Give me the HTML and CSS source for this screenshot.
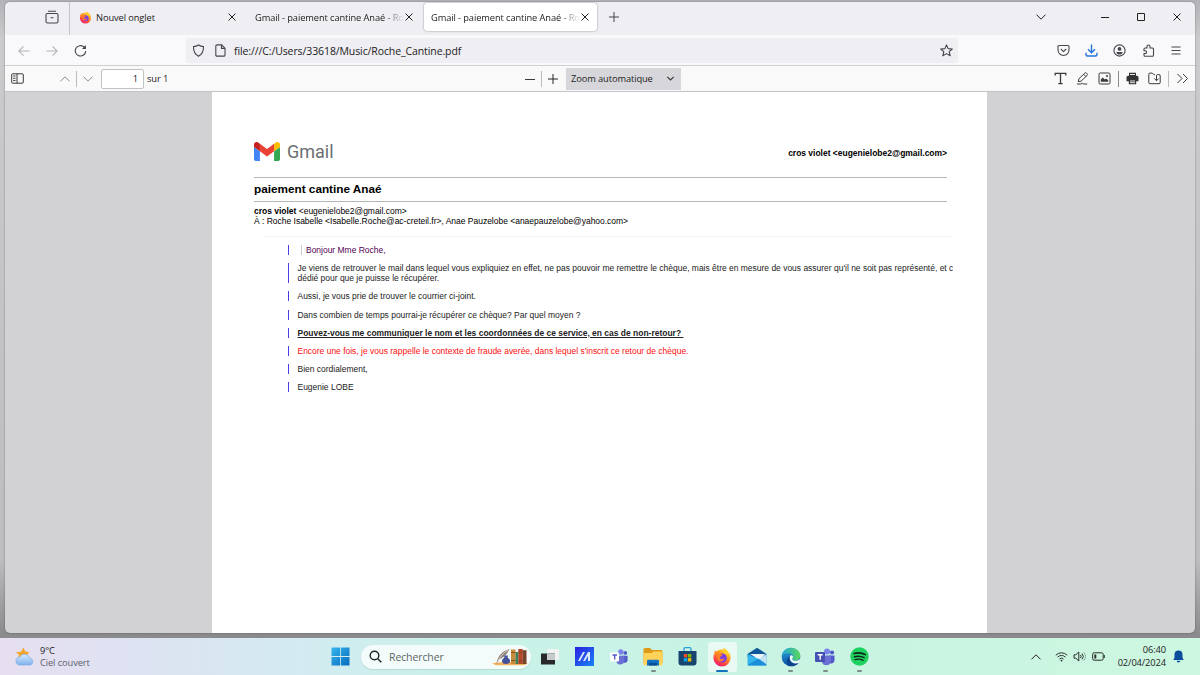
FILE: index.html
```html
<!DOCTYPE html>
<html lang="fr">
<head>
    <meta charset="UTF-8">
    <meta name="viewport" content="width=device-width, initial-scale=1.0">
    <title>Roche_Cantine.pdf</title>
    <link rel="stylesheet" href="styles.css">
</head>
<body>
    <svg class="defs" width="0" height="0">
        <defs>
            <linearGradient id="foxFlame" x1="0.8" y1="0" x2="0.2" y2="1">
                <stop offset="0" stop-color="#ffe226"/>
                <stop offset="0.4" stop-color="#ff9722"/>
                <stop offset="0.75" stop-color="#ff3b47"/>
                <stop offset="1" stop-color="#e31587"/>
            </linearGradient>
            <linearGradient id="winBlue" gradientUnits="userSpaceOnUse" x1="0" y1="0" x2="19" y2="19">
                <stop offset="0" stop-color="#35b8ee"/>
                <stop offset="1" stop-color="#0669bd"/>
            </linearGradient>
            <linearGradient id="myAsus" x1="0" y1="0" x2="1" y2="1">
                <stop offset="0" stop-color="#2a1fe0"/>
                <stop offset="1" stop-color="#1a84f5"/>
            </linearGradient>
            <linearGradient id="edgeBlue" x1="0" y1="0" x2="0" y2="1">
                <stop offset="0" stop-color="#2ba5dc"/>
                <stop offset="1" stop-color="#0c4fa3"/>
            </linearGradient>
            <linearGradient id="edgeGreen" x1="0" y1="0" x2="1" y2="0">
                <stop offset="0" stop-color="#22a5dd"/>
                <stop offset="1" stop-color="#5bd75a"/>
            </linearGradient>
            <linearGradient id="cloud" x1="0" y1="0" x2="0" y2="1">
                <stop offset="0" stop-color="#d7ebff"/>
                <stop offset="1" stop-color="#7fb2ee"/>
            </linearGradient>
            <symbol id="firefox" viewBox="0 0 20 20">
                <circle cx="10" cy="10.8" r="8.6" fill="url(#foxFlame)"/>
                <path d="M11.5 0.8c2.6 1.4 5.4 4 6.7 7.4l-6.4-1.4z" fill="#ffce28"/>
                <path d="M2 8.4L2.8 3.6 5.2 5.3 6.6 4l.8 2.5z" fill="#ff8a1f"/>
                <circle cx="10.2" cy="11" r="4.6" fill="#7a3fe0"/>
                <path d="M5 8.2c2-2.1 4.6-1.6 5.6-.2L8.8 9.6c-.9.4-1.2 1.4-.4 2.1 1.3 1 3.1.3 4.1-.6-.3 2.6-2.4 3.8-4.4 3.4C5.3 13.900 4.200 10.800 5 8.200z" fill="#ff7a2a"/>
            </symbol>
            <symbol id="close" viewBox="0 0 10 10">
                <path d="M1.500 1.500l7 7M8.500 1.500l-7 7" stroke="currentColor" fill="none"/>
            </symbol>
            <symbol id="chevron" viewBox="0 0 12 12">
                <path d="M1.500 3.700L6 8.200l4.500-4.500" stroke="currentColor" fill="none"/>
            </symbol>
            <symbol id="plus" viewBox="0 0 12 12">
                <path d="M6 1v10M1 6h10" stroke="currentColor" fill="none"/>
            </symbol>
            <symbol id="teams" viewBox="0 0 20 20">
                <circle cx="12" cy="4.500" r="3" fill="#7b83eb"/>
                <circle cx="17" cy="5.500" r="2.100" fill="#5059c9"/>
                <path d="M14 8.500h5.500v5a3.200 3.200 0 0 1-5.500 2z" fill="#5059c9"/>
                <path d="M7 8.500h9v5.500a4.600 4.600 0 0 1-9 1z" fill="#6a70d4"/>
            </symbol>
        </defs>
    </svg>

    <div class="desktop">
        <div class="window">
            <div class="tab-strip">
                <div class="history">
                    <svg width="14" height="14" viewBox="0 0 14 14" fill="none" stroke="#45454d" stroke-width="1.1"><path d="M3 1.300h8M1 5.500V5a1.500 1.500 0 0 1 1.500-1.500h9A1.500 1.500 0 0 1 13 5v6.500a1.500 1.500 0 0 1-1.500 1.500h-9A1.500 1.500 0 0 1 1 11.500zM5.500 7.700h3"/></svg>
                </div>
                <div class="tab first">
                    <svg class="favicon" width="13" height="13"><use href="#firefox"/></svg>
                    <span class="tab-title">Nouvel onglet</span>
                    <svg class="x" width="10" height="10"><use href="#close"/></svg>
                </div>
                <div class="tab">
                    <span class="tab-title faded">Gmail - paiement cantine Anaé - Ro</span>
                    <svg class="x" width="10" height="10"><use href="#close"/></svg>
                </div>
                <div class="tab active">
                    <span class="tab-title faded">Gmail - paiement cantine Anaé - Ro</span>
                    <svg class="x" width="10" height="10"><use href="#close"/></svg>
                </div>
                <svg class="new-tab" width="12" height="12"><use href="#plus"/></svg>
                <div class="win-buttons">
                    <svg width="12" height="12"><use href="#chevron"/></svg>
                    <svg class="min" width="10" height="10" viewBox="0 0 10 10" stroke="#222"><path d="M1 5.500h8"/></svg>
                    <svg width="10" height="10" viewBox="0 0 10 10" fill="none" stroke="#222"><path d="M1.500 1.500h7v7h-7z"/></svg>
                    <svg width="10" height="10"><use href="#close"/></svg>
                </div>
            </div>

            <div class="nav-bar">
                <div class="nav-buttons">
                    <svg class="disabled" width="12" height="12" viewBox="0 0 12 12"><path d="M11.500 6H1M5.500 1.300L.8 6l4.700 4.700"/></svg>
                    <svg class="disabled" width="12" height="12" viewBox="0 0 12 12"><path d="M.5 6H11M6.500 1.300L11.200 6l-4.700 4.700"/></svg>
                    <svg width="13" height="13" viewBox="0 0 13 13"><path d="M11.700 7A5.200 5.200 0 1 1 10 3l1.500 1.500"/><path d="M11.900 1v3.900H8z" fill="#45454d" stroke="none"/></svg>
                </div>
                <div class="url-bar">
                    <svg width="13" height="13" viewBox="0 0 13 13"><path d="M6.500 1c1.500 1 3.200 1.500 5 1.600C11.600 7.500 10.100 10.600 6.500 12.300 2.900 10.600 1.400 7.500 1.500 2.600 3.300 2.500 5 2 6.500 1z"/></svg>
                    <svg class="doc" width="11" height="13" viewBox="0 0 11 13"><path d="M2 .9h4.700l3.300 3.300v6.700a1.200 1.200 0 0 1-1.200 1.200H2A1.200 1.200 0 0 1 .8 10.900V2.100A1.200 1.200 0 0 1 2 .9zM6.500 1v3.400H10"/></svg>
                    <span>file:///C:/Users/33618/Music/Roche_Cantine.pdf</span>
                    <svg class="star" width="13" height="13" viewBox="0 0 13 13"><path d="M6.500.9l1.600 3.700 4.200.4-3.100 2.700 1 4.100-3.700-2.200-3.700 2.200 1-4.100L.7 5l4.200-.4z" stroke-linejoin="round"/></svg>
                </div>
                <div class="nav-tools">
                    <svg width="13" height="13" viewBox="0 0 13 13"><path d="M2 1.500h9a1 1 0 0 1 1 1V6A5.500 5.500 0 0 1 1 6V2.500a1 1 0 0 1 1-1zM3.800 5l2.700 2.600L9.200 5"/></svg>
                    <svg class="download" width="13" height="13" viewBox="0 0 13 13"><path d="M6.500.5v8M3 5.300l3.500 3.500L10 5.300M1 8.800v1.700a1.500 1.500 0 0 0 1.500 1.500h8a1.500 1.500 0 0 0 1.500-1.500V8.800"/></svg>
                    <svg width="13" height="13" viewBox="0 0 13 13"><circle cx="6.500" cy="6.500" r="5.600"/><circle cx="6.500" cy="4.900" r="1.900" fill="#45454d" stroke="none"/><path d="M3.300 8h6.400c-.5 1.800-1.700 2.600-3.200 2.600S3.800 9.800 3.300 8z" fill="#45454d" stroke="none"/></svg>
                    <svg width="13" height="13" viewBox="0 0 13 13"><path d="M5 4V2.500a1.500 1.500 0 0 1 3 0V4h2.500a1 1 0 0 1 1 1v6.200a1 1 0 0 1-1 1H3a1 1 0 0 1-1-1V9.500h1.200a1.300 1.300 0 0 0 0-2.700H2V5a1 1 0 0 1 1-1z"/></svg>
                    <svg width="12" height="12" viewBox="0 0 12 12"><path d="M1.500 2h9M1.500 5.500h9M1.500 9h9"/></svg>
                </div>
            </div>

            <div class="pdf-bar">
                <div class="pdf-left">
                    <svg class="sidebar" width="13" height="11" viewBox="0 0 13 11"><path d="M1.500.8h10a.8.8 0 0 1 .8.800v7.800a.8.8 0 0 1-.8.800h-10a.8.8 0 0 1-.8-.8V1.600a.8.8 0 0 1 .8-.8zM6 .8v9.400M2.200 3h2.300M2.200 5.300h2.300M2.200 7.600h2.300"/></svg>
                    <svg class="up" width="12" height="12"><use href="#chevron"/></svg>
                    <i class="sep"></i>
                    <svg class="down" width="12" height="12"><use href="#chevron"/></svg>
                    <span class="page-number">1</span>
                    <span>sur 1</span>
                </div>
                <div class="pdf-zoom">
                    <svg width="12" height="12" viewBox="0 0 12 12"><path d="M1 6.500h10"/></svg>
                    <i class="sep"></i>
                    <svg width="12" height="12"><use href="#plus"/></svg>
                    <div class="zoom-select">
                        <span>Zoom automatique</span>
                        <svg width="9" height="9" viewBox="0 0 9 9" stroke-width="1.200"><path d="M1.300 2.800l3.200 3.200 3.200-3.200"/></svg>
                    </div>
                </div>
                <div class="pdf-tools">
                    <svg width="13" height="13" viewBox="0 0 13 13" stroke-width="1.300"><path d="M1.200 3.500V1.300h10.600v2.200M6.500 1.300v10.400M4.300 11.700h4.400"/></svg>
                    <svg width="13" height="13" viewBox="0 0 13 13"><path d="M2.300 9.700l.6-2.900L8.700 1.200a1.300 1.300 0 0 1 1.900 0l.4.400a1.300 1.300 0 0 1 0 1.900L5.200 9.100zM7.700 2.300l2.200 2.200M1 12h3.500l2-.7 1.200.7h3.500"/></svg>
                    <svg width="13" height="13" viewBox="0 0 13 13"><rect x="1" y="1" width="11" height="11" rx="1.200"/><path d="M2.800 9.800V7.500l2-2 2 2 1.200-1 2.200 1.800v1.500z" fill="#3a3a3a" stroke="none"/><circle cx="9" cy="4" r="1" fill="#3a3a3a" stroke="none"/></svg>
                    <i class="sep dark"></i>
                    <svg width="13" height="13" viewBox="0 0 13 13"><path d="M3 .7h7v3h1a1.500 1.500 0 0 1 1.500 1.500v4H10.200v3H2.800v-3H.5v-4A1.500 1.500 0 0 1 2 3.700h1z" fill="#333" stroke="none"/><path d="M4 2.500h5M4 9h5M4 10.700h5" stroke="#f9f9fa" stroke-width=".9"/></svg>
                    <svg width="13" height="13" viewBox="0 0 13 13"><path d="M6 11.700H2A1.200 1.200 0 0 1 .8 10.500V2.300A1.200 1.200 0 0 1 2 1.100h2.300l1.500 1.500H7M9 2.600h1.800A1.300 1.300 0 0 1 12.200 4v6.500a1.200 1.200 0 0 1-1.200 1.200H6M8.500 3v5.600M6.300 6.500l2.200 2.200 2.200-2.200"/></svg>
                    <i class="sep"></i>
                    <svg width="13" height="13" viewBox="0 0 13 13"><path d="M1.500 2l4.500 4.500L1.500 11M7 2l4.500 4.500L7 11"/></svg>
                </div>
            </div>

            <div class="viewer">
                <div class="page">
                    <div class="mail-header">
                        <div class="gmail">
                            <svg width="26" height="19" viewBox="52 42 88 66" preserveAspectRatio="none">
                                <path fill="#4285f4" d="M58 108h14V74L52 59v43c0 3.320 2.690 6 6 6"/>
                                <path fill="#34a853" d="M120 108h14c3.320 0 6-2.690 6-6V59l-20 15"/>
                                <path fill="#fbbc04" d="M120 48v26l20-15v-8c0-7.420-8.470-11.650-14.400-7.200"/>
                                <path fill="#ea4335" d="M72 74V48l24 18 24-18v26L96 92"/>
                                <path fill="#c5221f" d="M52 51v8l20 15V48l-5.600-4.200c-5.940-4.450-14.400-.22-14.400 7.200"/>
                            </svg>
                            <span>Gmail</span>
                        </div>
                        <b class="account">cros violet &lt;eugenielobe2@gmail.com&gt;</b>
                    </div>
                    <h1>paiement cantine Anaé</h1>
                    <div class="from"><b>cros violet</b> &lt;eugenielobe2@gmail.com&gt;</div>
                    <div class="to">À : Roche Isabelle &lt;Isabelle.Roche@ac-creteil.fr&gt;, Anae Pauzelobe &lt;anaepauzelobe@yahoo.com&gt;</div>
                    <div class="mail-body">
                        <p class="quoted"><span>Bonjour Mme Roche,</span></p>
                        <p>Je viens de retrouver le mail dans lequel vous expliquiez en effet, ne pas pouvoir me remettre le chèque, mais être en mesure de vous assurer qu'il ne soit pas représenté, et c<br>dédié pour que je puisse le récupérer.</p>
                        <p>Aussi, je vous prie de trouver le courrier ci-joint.</p>
                        <p>Dans combien de temps pourrai-je récupérer ce chèque? Par quel moyen ?</p>
                        <p class="question">Pouvez-vous me communiquer le nom et les coordonnées de ce service, en cas de non-retour?&nbsp;</p>
                        <p class="warning">Encore une fois, je vous rappelle le contexte de fraude averée, dans lequel s'inscrit ce retour de chèque.</p>
                        <p>Bien cordialement,</p>
                        <p>Eugenie LOBE</p>
                    </div>
                </div>
            </div>
        </div>
    </div>

    <div class="taskbar">
        <div class="weather">
            <svg width="20" height="20" viewBox="0 0 20 20">
                <path d="M8.500.5l1.800 4 3.700.5-2.500 4.500L3 11l1-3.200L.8 5.300l5.200-.6z" fill="#f3a62c"/>
                <path d="M5.200 18a4 4 0 0 1-.4-8 5.200 5.200 0 0 1 9.700 1 3.600 3.600 0 0 1 .8 7z" fill="url(#cloud)" stroke="#7aa9e2" stroke-width=".6"/>
            </svg>
            <div>
                <div class="temp">9°C</div>
                <div class="sky">Ciel couvert</div>
            </div>
        </div>
        <div class="apps">
            <div class="start">
                <svg width="19" height="19" viewBox="0 0 19 19" fill="url(#winBlue)"><path d="M.5.5h8.600v8.600H.5zM9.900.5h8.600v8.600H9.900zM.5 9.900h8.600v8.600H.5zM9.900 9.900h8.600v8.600H9.900z"/></svg>
            </div>
            <div class="search">
                <svg width="13" height="13" viewBox="0 0 13 13" fill="none" stroke="#222" stroke-width="1.400"><circle cx="5.500" cy="5.500" r="4.300"/><path d="M8.700 8.700l3.600 3.600"/></svg>
                <span>Rechercher</span>
                <svg class="books" width="36" height="19" viewBox="0 0 36 19">
                    <path d="M0 16.500c6-2 28-2 36 0l-4 1.700H4z" fill="#f0b25c"/>
                    <path d="M4.500 16C6 9 10 4 17.500 2 15 7 12 10.500 7 12.500L5.500 16.500z" fill="#8a7f78"/>
                    <path d="M5 16C8 10 11 6 16 3" stroke="#f1e6d8" stroke-width=".8" fill="none"/>
                    <path d="M12.300 8.500h3.400v2.200c1.500.8 2.300 2 2.300 3.400 0 2-1.500 3-4 3s-4-1-4-3c0-1.400.8-2.600 2.300-3.400z" fill="#44519b"/>
                    <path d="M19 2.500h4.500V17H19z" fill="#c98a3c"/>
                    <path d="M23.500 5h2.800v12h-2.800z" fill="#3f8058"/>
                    <path d="M26.300 2h4.500v15h-4.500z" fill="#b5462c"/>
                    <path d="M30.800 3.200h3.700V17h-3.700z" fill="#74452b"/>
                    <path d="M19 5.500h4.500M19 13.500h4.500M26.300 5h4.500M26.300 14h4.500" stroke="#7d4a22" stroke-width=".9"/>
                </svg>
            </div>
            <div class="app">
                <svg width="20" height="20" viewBox="0 0 20 20"><path d="M7 2h12v11H7z" fill="#f1f3f3"/><path d="M1 6.500h14v11H1z" fill="#262829"/><path d="M7 6.500h8V13H7z" fill="#c5cccb"/></svg>
            </div>
            <div class="app">
                <svg width="19" height="19" viewBox="0 0 19 19"><path d="M0 0h19v19H0z" fill="url(#myAsus)"/><path d="M3 14L8 5h2L5 14zM8 14l5-9h2v9h-2V9l-3 5z" fill="#dfeaff"/></svg>
            </div>
            <div class="app">
                <svg width="18" height="18" viewBox="0 0 20 20"><use href="#teams"/><rect x="0" y="5" width="10" height="10" rx="1" fill="#fff"/><path d="M2.700 7.800h5M5.200 7.800v5" stroke="#5059c9" stroke-width="1.500"/></svg>
            </div>
            <div class="app open">
                <svg width="20" height="20" viewBox="0 0 20 20"><path d="M.5 2.500A1.500 1.500 0 0 1 2 1h5l2 2h9a1.500 1.500 0 0 1 1.500 1.500V16H.5z" fill="#dc9b18"/><path d="M.5 6h8l2-1.500h9V17a1.300 1.300 0 0 1-1.300 1.300H1.800A1.300 1.300 0 0 1 .5 17z" fill="#ffd35a"/><path d="M4 18.500V14a1.300 1.300 0 0 1 1.300-1.300h9.400A1.300 1.300 0 0 1 16 14v4.500z" fill="#1272c4"/><path d="M6 15.800h8v2.700H6z" fill="#0b4e93"/></svg>
            </div>
            <div class="app">
                <svg width="19" height="19" viewBox="0 0 19 19"><path d="M6 4V2a1.300 1.300 0 0 1 1.300-1.300h4.400A1.300 1.300 0 0 1 13 2v2" fill="none" stroke="#2b9fdc" stroke-width="1.300"/><path d="M.5 4h18v11.500a3 3 0 0 1-3 3h-12a3 3 0 0 1-3-3z" fill="#17456f"/><path d="M5.800 7h3.400v3.400H5.800z" fill="#f25022"/><path d="M9.900 7h3.400v3.400H9.900z" fill="#7fba00"/><path d="M5.800 11.100h3.400v3.400H5.800z" fill="#00a4ef"/><path d="M9.900 11.100h3.400v3.400H9.900z" fill="#ffb900"/></svg>
            </div>
            <div class="app current">
                <svg width="20" height="20"><use href="#firefox"/></svg>
            </div>
            <div class="app">
                <svg width="20" height="20" viewBox="0 0 20 20"><path d="M.5 7L10 .8 19.500 7v3H.5z" fill="#0f5699"/><path d="M3 7h15l-5 6z" fill="#eaf4fb"/><path d="M.5 7l12.500 5.500L19.500 7v10.500a1 1 0 0 1-1 1h-17a1 1 0 0 1-1-1z" fill="#35b5ee"/><path d="M19.500 7v10.500L12 12z" fill="#c3e3f3"/><path d="M.5 18L10 12.500l2-.5 7.500 5.500a1 1 0 0 1-1 1h-17z" fill="#1a8fd8"/></svg>
            </div>
            <div class="app open">
                <svg width="20" height="20" viewBox="0 0 20 20"><circle cx="10" cy="10" r="9.300" fill="url(#edgeBlue)"/><path d="M.8 9C1.500 3.800 5.500.7 10 .7c5.500 0 9.300 4 9.300 8 0 3-2.300 4.800-5 4.800-2 0-3-.7-3-1.600 0-.7 1-1 1-2.400 0-1.800-2-3.200-4.600-3.200C4.500 6.300 1.900 7.300.8 9z" fill="url(#edgeGreen)"/><path d="M9 8.500c-2 3.500.5 8.300 5 8.300 1.500 0 2.800-.4 3.800-1-1.500 2.300-4 3.500-6.800 3.500-5.500-.3-7.200-6.300-2-10.800z" fill="#0d428c"/><path d="M9.200 8.700c1.300-.9 3 .2 2.800 1.500-.2.900-1 1-.7 2 .4 1.300 2 1.700 3.700 1.500 2-.1 3.300-.9 4.200-2-.2 2-.8 3.200-1.400 4.100-3.300 1.200-6.500.6-8-1.700-1.100-1.800-1.300-3.800-.6-5.400z" fill="#eafaf6"/></svg>
            </div>
            <div class="app open">
                <svg width="20" height="20" viewBox="0 0 20 20"><use href="#teams"/><rect x="0" y="5" width="10" height="10" rx="1" fill="#4650b4"/><path d="M2.700 7.800h5M5.200 7.800v5" stroke="#fff" stroke-width="1.400"/></svg>
            </div>
            <div class="app open">
                <svg width="19" height="19" viewBox="0 0 19 19" fill="none" stroke="#10251a" stroke-linecap="round"><circle cx="9.500" cy="9.500" r="9.200" fill="#1ed15f" stroke="none"/><path d="M4 6.500c4-1.200 8-.8 11.200 1" stroke-width="1.700"/><path d="M4.500 9.700c3.500-1 6.800-.6 9.600.9" stroke-width="1.500"/><path d="M5 12.600c3-.8 5.700-.5 8.100.8" stroke-width="1.300"/></svg>
            </div>
        </div>
        <div class="tray">
            <svg class="more" width="12" height="12"><use href="#chevron"/></svg>
            <svg class="wifi" width="13" height="11" viewBox="0 0 13 11" fill="none" stroke="#2a2f2d"><path d="M.8 4.200a8 8 0 0 1 11.400 0M2.600 6.100a5.500 5.500 0 0 1 7.800 0M4.500 8a2.900 2.900 0 0 1 4 0"/><circle cx="6.500" cy="9.600" r=".9" fill="#2a2f2d" stroke="none"/></svg>
            <svg class="sound" width="13" height="11" viewBox="0 0 13 11" fill="none" stroke="#2a2f2d"><path d="M1 3.800h1.800L5.800 1v9L2.800 7.200H1z"/><path d="M7.500 4a2.300 2.300 0 0 1 0 3M9 2.600a4.300 4.300 0 0 1 0 5.800"/><path d="M10.700 1.300a6.500 6.500 0 0 1 0 8.400" stroke="#93a79f"/></svg>
            <svg class="battery" width="13" height="9" viewBox="0 0 13 9" fill="none" stroke="#2a2f2d"><rect x=".6" y=".8" width="10.600" height="7.400" rx="1.600"/><path d="M2.300 2.500h2v4h-2z" fill="#2a2f2d" stroke="none"/><path d="M12.300 3v3"/></svg>
            <div class="clock">
                <div>06:40</div>
                <div>02/04/2024</div>
            </div>
            <svg class="bell" width="11" height="13" viewBox="0 0 11 13" fill="#0a4d9c"><path d="M5.500.5a4 4 0 0 1 4 4v3l1.200 2.500H.3L1.500 7.500v-3a4 4 0 0 1 4-4zM3.700 10.700h3.600a1.800 1.800 0 0 1-3.600 0z"/></svg>
        </div>
    </div>
</body>
</html>
```
FILE: styles.css
```css
* {
    margin: 0;
    padding: 0;
    box-sizing: border-box;
}

body {
    width: 1200px;
    height: 675px;
    overflow: hidden;
    display: flex;
    flex-direction: column;
    font-family: 'Open Sans', 'Noto Sans', sans-serif;
    font-size: 9.300px;
    letter-spacing: -0.100px;
    color: #222;
}

svg {
    display: block;
    flex: none;
}

/* shared gradients and symbols, takes no room */
.defs {
    position: absolute;
}

.desktop {
    height: 638px;
    padding: 2px 5px 5px;
    background: linear-gradient(#b3b2b8 0, #cbcbcd 40px, #bdbdbf 560px, #8b8a8c 634px);
}

.window {
    height: 631px;
    border-radius: 5px;
    overflow: hidden;
    background: #d2d2d4;
    display: flex;
    flex-direction: column;
    box-shadow: 0 0 2px rgba(0, 0, 0, 0.4);
}

/* tabs */
.tab-strip {
    height: 33px;
    padding-bottom: 3px;
    background: #efeef3;
    display: flex;
    align-items: center;
    color: #222;
}

.history {
    width: 65px;
    height: 33px;
    margin-bottom: -3px;
    padding: 8px 0 0 40px;
    border-right: 1px solid #c5c4ca;
}

.tab {
    width: 174px;
    height: 28px;
    margin-right: 3px;
    padding: 0 7px 0 8px;
    display: flex;
    align-items: center;
    justify-content: space-between;
}

.tab.first {
    padding-left: 9px;
}

.tab.active {
    width: 173px;
    margin: 0 11px 0 0;
    padding-left: 7px;
    background: #fff;
    border-radius: 3px;
    box-shadow: 0 0 2px rgba(0, 0, 0, 0.45);
}

.favicon {
    margin-right: 4px;
}

.tab-title {
    flex: 1;
    overflow: hidden;
    white-space: nowrap;
}

.faded {
    -webkit-mask-image: linear-gradient(to right, #000 86%, transparent 100%);
    mask-image: linear-gradient(to right, #000 86%, transparent 100%);
}

.new-tab {
    color: #45454d;
}

.win-buttons {
    margin-left: auto;
    padding-right: 13px;
    display: flex;
    align-items: center;
    gap: 26px;
}

.win-buttons .min {
    margin-left: 27px;
}

/* address bar */
.nav-bar {
    height: 31px;
    padding-top: 1px;
    background: #f9f9fb;
    border-bottom: 1px solid #d0d0d4;
    display: flex;
    align-items: center;
}

.nav-bar svg {
    fill: none;
    stroke: #45454d;
    stroke-width: 1.1;
}

.nav-bar svg.disabled {
    stroke: #b4b4b8;
}

.nav-bar svg.download {
    stroke: #2374dc;
    stroke-width: 1.4;
}

.nav-buttons {
    width: 181px;
    padding-left: 13px;
    display: flex;
    align-items: center;
    gap: 16px;
}

.url-bar {
    width: 772px;
    height: 25px;
    padding: 0 5px 0 6px;
    border-radius: 3px;
    background: #efeef3;
    display: flex;
    align-items: center;
    font-size: 10.500px;
}

.doc {
    margin: 0 8px 0 10px;
}

.star {
    margin-left: auto;
}

.nav-tools {
    margin-left: auto;
    padding-right: 13px;
    display: flex;
    align-items: center;
    gap: 15.300px;
}

/* pdf toolbar */
.pdf-bar {
    height: 26px;
    background: #f9f9fa;
    border-bottom: 1px solid #c4c4c6;
    display: flex;
    align-items: center;
}

.pdf-bar svg {
    fill: none;
    stroke: #3a3a3a;
}

.sep {
    width: 1px;
    height: 16px;
    background: #bbb;
}

.sep.dark {
    background: #8c8c8c;
}

.pdf-left {
    width: 519px;
    padding-left: 6px;
    display: flex;
    align-items: center;
}

.pdf-left .up {
    margin: 0 5px 0 35px;
    transform: rotate(180deg);
}

.pdf-left .down {
    margin: 0 7px 0 5px;
}

.pdf-left .up use,
.pdf-left .down use {
    color: #8a8a8a;
}

.page-number {
    width: 43px;
    height: 20px;
    margin-right: 3px;
    padding: 2px 5px;
    border: 1px solid #c2c2c4;
    border-radius: 2px;
    background: #fff;
    text-align: right;
}

.pdf-zoom {
    display: flex;
    align-items: center;
    gap: 5px;
}

.zoom-select {
    width: 115px;
    height: 22px;
    margin-left: 2px;
    padding: 0 6px 0 5px;
    background: #d7d7db;
    display: flex;
    align-items: center;
    justify-content: space-between;
}

.pdf-tools {
    margin-left: auto;
    padding-right: 6px;
    display: flex;
    align-items: center;
    gap: 9px;
}

.pdf-tools .sep {
    margin: 0 -2px;
}

/* document */
.viewer {
    flex: 1;
    padding-right: 1px;
    display: flex;
    justify-content: center;
}

.page {
    width: 775px;
    background: #fff;
    padding: 50px 40px 0 42px;
    font-family: 'Liberation Sans', Arial, sans-serif;
    font-size: 8.480px;
    letter-spacing: 0;
    line-height: 10px;
    color: #000;
}

.mail-header {
    height: 36px;
    display: flex;
    justify-content: space-between;
    border-bottom: 1px solid #b4b8b6;
}

.gmail {
    display: flex;
    height: 19px;
    align-items: center;
    gap: 7px;
    font-family: Roboto, sans-serif;
    font-size: 18px;
    color: #6a6d71;
}

.account {
    margin-top: 6px;
}

h1 {
    height: 24px;
    border-bottom: 1px solid #b4b8b6;
    font-size: 11.750px;
    line-height: 21px;
}

.from {
    margin-top: 4px;
}

.mail-body {
    width: 690px;
    margin: 10px 0 0 9px;
    padding: 8px 0 0 25px;
    border-top: 1px solid #f3f3f3;
    overflow: hidden;
    color: #222;
}

.mail-body p {
    margin-bottom: 8.200px;
    padding-left: 8.500px;
    border-left: 1px solid #4a3fe6;
    white-space: nowrap;
}

.mail-body .quoted {
    padding-left: 12px;
    color: #500050;
}

.quoted span {
    display: inline-block;
    padding-left: 4px;
    border-left: 1px solid #ccc;
}

.mail-body .question {
    font-weight: bold;
    text-decoration: underline;
}

.mail-body .warning {
    color: #fb0f0f;
}

/* taskbar */
.taskbar {
    height: 37px;
    background: linear-gradient(to right, #e6dff0 0, #dfe2f2 120px, #d3ebf1 300px, #c8f2e9 480px, #c9f4e2 800px, #cdf7e0 1200px);
    display: flex;
    align-items: center;
}

.weather {
    width: 323px;
    padding-left: 15px;
    display: flex;
    align-items: center;
    gap: 5px;
    line-height: 12px;
}

.sky {
    color: #5d5f6c;
}

.apps {
    display: flex;
    align-items: center;
}

.start {
    width: 38px;
    padding-left: 8px;
}

.search {
    width: 170px;
    height: 24px;
    margin-right: 2px;
    padding: 0 3px 0 8px;
    border-radius: 12px;
    background: #f4fcfb;
    display: flex;
    align-items: center;
    font-size: 10.500px;
    color: #5c6463;
    box-shadow: 0 1px 1px rgba(0, 0, 0, 0.1);
}

.search span {
    margin-left: 7px;
}

.books {
    margin-left: auto;
}

.app {
    width: 34.400px;
    height: 30px;
    position: relative;
    display: flex;
    align-items: center;
    justify-content: center;
}

.app.open::after,
.app.current::after {
    content: "";
    position: absolute;
    bottom: 0;
    left: 50%;
    width: 5px;
    height: 2px;
    margin-left: -2.500px;
    border-radius: 1px;
    background: #7b8f88;
}

.app.current {
    width: 29px;
    margin: 0 2.700px;
    border-radius: 3px;
    background: #e9faf4;
}

.app.current::after {
    width: 12px;
    margin-left: -6px;
    background: #1673ba;
}

.tray {
    margin-left: auto;
    padding-right: 16px;
    display: flex;
    align-items: center;
    color: #222;
}

.more {
    margin-right: 13px;
    transform: rotate(180deg);
}

.wifi {
    margin-right: 5px;
}

.sound {
    margin-right: 6px;
}

.clock {
    width: 61px;
    margin-right: 7px;
    text-align: right;
    line-height: 12.500px;
    display: flex;
    flex-direction: column;
    align-items: flex-end;
}
```
